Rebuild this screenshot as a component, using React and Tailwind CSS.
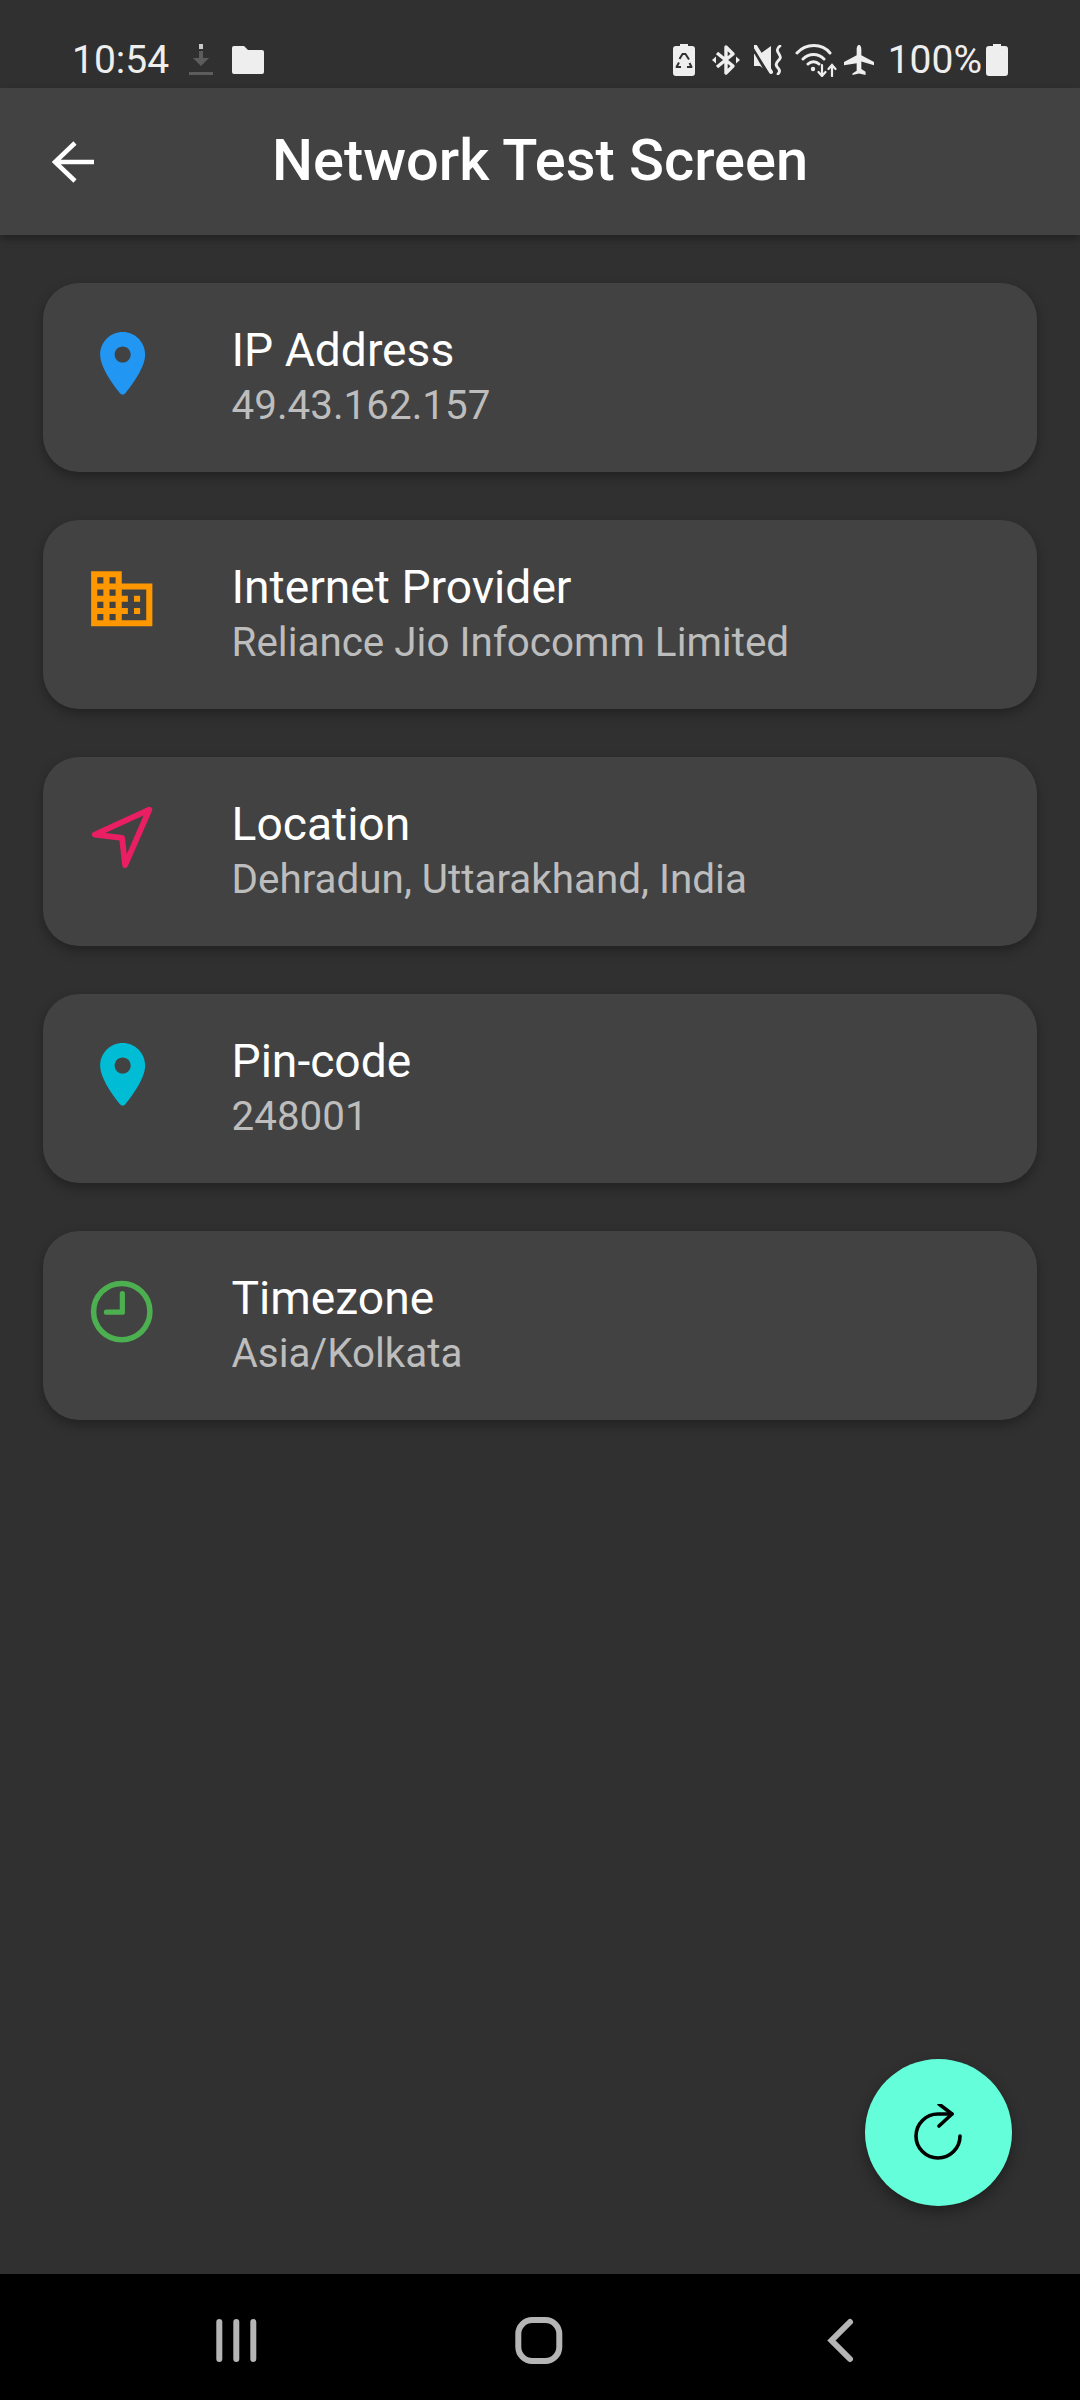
const roboto = { fontFamily: "Roboto, sans-serif" };

function Place({ color }) {
  return (
    <svg viewBox="0 0 24 24" className="w-[73.5px] h-[73.5px] shrink-0" fill={color}>
      <path
        transform="translate(12.3 2.3) scale(1.05) translate(-12 -2)"
        fillRule="evenodd"
        d="M12 2c-3.87 0-7 3.13-7 7 0 4.17 4.42 9.92 6.24 12.11.4.48 1.13.48 1.53 0C14.58 18.92 19 13.17 19 9c0-3.87-3.13-7-7-7zm0 9.5c-1.38 0-2.5-1.12-2.5-2.5s1.12-2.5 2.5-2.5 2.5 1.12 2.5 2.5-1.12 2.5-2.5 2.5z"
      />
    </svg>
  );
}
function Business() {
  return (
    <svg viewBox="0 0 24 24" className="w-[73.5px] h-[73.5px] shrink-0" fill="#FF9800">
      <path d="M12 7V3H2v18h20V7H12zM6 19H4v-2h2v2zm0-4H4v-2h2v2zm0-4H4V9h2v2zm0-4H4V5h2v2zm4 12H8v-2h2v2zm0-4H8v-2h2v2zm0-4H8V9h2v2zm0-4H8V5h2v2zm10 12h-8v-2h2v-2h-2v-2h2v-2h-2V9h8v10zm-2-8h-2v2h2v-2zm0 4h-2v2h2v-2z" />
    </svg>
  );
}
function NearMe() {
  return (
    <svg viewBox="0 0 24 24" className="w-[73.5px] h-[73.5px] shrink-0" fill="none" stroke="#E91E63" strokeWidth="1.9" strokeLinejoin="round">
      <path d="M21 3.500 3.200 11.600l8.900 1.100 1 8.900z" />
    </svg>
  );
}
function Clock() {
  return (
    <svg viewBox="0 0 24 24" className="w-[73.5px] h-[73.5px] shrink-0" fill="none" stroke="#4CAF50" strokeWidth="1.8" strokeLinecap="round" strokeLinejoin="round">
      <circle cx="12" cy="12.600" r="9.200" />
      <path d="M12.200 6.700v6.100H7" strokeWidth="1.700" />
    </svg>
  );
}

function Card({ icon, title, sub }) {
  return (
    <div className="flex h-[189px] items-start rounded-[36px] bg-[#424242] p-[42px] shadow-[0_5px_12px_rgba(0,0,0,0.3)]">
      {icon}
      <div className="ml-[73px] -mt-[2px]">
        <div className="text-[46.2px] leading-[55px] text-white">{title}</div>
        <div className="mt-[3px] text-[40.4px] leading-[50px] text-[#bdbdbd]">{sub}</div>
      </div>
    </div>
  );
}

function Battery({ children }) {
  return (
    <svg viewBox="0 0 22 32" className="w-[22px] h-[32px]" fill="#eeeeee">
      <path d="M7 0h8v2h4a3 3 0 0 1 3 3v24a3 3 0 0 1-3 3H3a3 3 0 0 1-3-3V5a3 3 0 0 1 3-3h4z" />
      {children}
    </svg>
  );
}

function StatusBar() {
  return (
    <div className="flex h-[88px] items-center justify-between bg-[#303030] pl-[72px] pr-[72px] pt-[32px] text-[#eeeeee]">
      <div className="flex items-center">
        <span className="text-[39px] leading-[44px]">10:54</span>
        <svg viewBox="0 0 28 36" className="ml-[18px] w-[28px] h-[36px]" fill="#5c5c5c">
          <path d="M12 2h4v5h-4z" fill="#c8c8c8" />
          <path d="M12 9h4v7h6l-8 8-8-8h6zM2 30h24v3H2z" />
        </svg>
        <svg viewBox="0 0 32 28" className="ml-[17px] w-[32px] h-[28px]" fill="#eeeeee">
          <path d="M2 0h10l4 4h14a2 2 0 0 1 2 2v20a2 2 0 0 1-2 2H2a2 2 0 0 1-2-2V2a2 2 0 0 1 2-2z" />
        </svg>
      </div>
      <div className="flex items-center">
        <Battery>
          <path d="M9.500 10 6.500 15M12.500 10l3.500 5.500M8 23H3.500l2.500-4.500M14 23h4.500l-2-4" fill="none" stroke="#303030" strokeWidth="2" strokeLinejoin="round" />
          <path d="M9 10h4" fill="none" stroke="#303030" strokeWidth="2" />
        </Battery>
        <svg viewBox="0 0 28 32" className="ml-[17px] w-[28px] h-[32px]" fill="none" stroke="#eeeeee" strokeWidth="3.400" strokeLinejoin="round">
          <path d="M5 9l16 13-7 7V3l7 7L5 23" />
          <path d="M0 16l4-3.500v7zM28 16l-4-3.500v7z" fill="#eeeeee" stroke="none" />
        </svg>
        <svg viewBox="0 0 30 30" className="ml-[14px] w-[30px] h-[30px]">
          <path d="M0 9h6l11-8v28L6 21H0z" fill="#eeeeee" />
          <path d="M0 2l16 28" stroke="#303030" strokeWidth="6" />
          <path d="M1 1l16 26" stroke="#eeeeee" strokeWidth="4" strokeLinecap="round" />
          <path d="M26 1c-4 3-3 5-1 8s2 4-1 7-2 5 0 7 2 4 0 6" fill="none" stroke="#eeeeee" strokeWidth="2.800" strokeLinecap="round" />
        </svg>
        <svg viewBox="0 0 42 34" className="ml-[11px] w-[42px] h-[34px]" fill="none" stroke="#eeeeee" strokeWidth="3" strokeLinecap="round">
          <path d="M2 10c9-10 25-10 33 0M8 16c6-6 15-6 21 0M13 21c3-3 8-3 11 0" />
          <circle cx="18" cy="26" r="2.200" fill="#eeeeee" stroke="none" />
          <path d="M27 22v11M23.500 29l3.500 4 3.500-4M37 33V22M33.500 26l3.500-4 3.500 4" strokeWidth="2.200" />
        </svg>
        <svg viewBox="0 0 32 32" className="ml-[7px] w-[30px] h-[30px]" fill="#eeeeee">
          <path d="M16 0c2 0 2.500 3 2.500 5v6L32 18v3.500l-13.500-4v8l4.500 3V32l-7-1.500L9 32v-1.500l4.500-3v-8L0 21.500V18l13.500-7V5c0-2 .5-5 2.500-5z" />
        </svg>
        <span className="ml-[14px] text-[39px] leading-[44px]">100%</span>
        <div className="ml-[4px]">
          <Battery />
        </div>
      </div>
    </div>
  );
}

export default function App() {
  return (
    <div className="relative flex h-[2400px] w-[1080px] flex-col overflow-hidden bg-[#303030]" style={roboto}>
      <StatusBar />
      <header className="flex h-[147px] items-center bg-[#424242] shadow-[0_4px_8px_rgba(0,0,0,0.3)]">
        <svg viewBox="0 0 42 42" className="ml-[52px] w-[42px] h-[42px]" fill="none" stroke="#ffffff" strokeWidth="4.500">
          <path d="M44 21H2M23 2 3 21l20 19" />
        </svg>
        <h1 className="ml-[178px] -mt-[2px] text-[57.75px] font-medium leading-none text-white">Network Test Screen</h1>
      </header>
      <main className="flex flex-1 flex-col gap-[48px] px-[43px] pt-[48px]">
        <Card icon={<Place color="#2196F3" />} title="IP Address" sub="49.43.162.157" />
        <Card icon={<Business />} title="Internet Provider" sub="Reliance Jio Infocomm Limited" />
        <Card icon={<NearMe />} title="Location" sub="Dehradun, Uttarakhand, India" />
        <Card icon={<Place color="#00BCD4" />} title="Pin-code" sub="248001" />
        <Card icon={<Clock />} title="Timezone" sub="Asia/Kolkata" />
      </main>
      <button className="absolute left-[865px] top-[2059px] flex h-[147px] w-[147px] items-center justify-center rounded-full bg-[#64FFDA] shadow-[0_6px_14px_rgba(0,0,0,0.35)]">
        <svg viewBox="0 0 60 60" className="ml-[2px] mt-[3px] w-[60px] h-[60px]" fill="none" stroke="#000000" strokeWidth="3.600" strokeLinecap="round" strokeLinejoin="round">
          <path d="M50 32a22 22 0 1 1-22-22h14" />
          <path d="M29 0l13 10-13 12" />
        </svg>
      </button>
      <nav className="flex h-[126px] items-center bg-black">
        <svg viewBox="0 0 52 60" className="ml-[210px] w-[52px] h-[60px]" fill="none" stroke="#b5b5b5" strokeWidth="6" strokeLinecap="round">
          <path d="M9.300 15v37M26.300 15v37M43.300 15v37" />
        </svg>
        <svg viewBox="0 0 54 60" className="ml-[250px] w-[54px] h-[60px]" fill="none" stroke="#b5b5b5" strokeWidth="6">
          <rect x="6.300" y="13" width="41" height="41" rx="14" />
        </svg>
        <svg viewBox="0 0 32 60" className="ml-[258px] w-[32px] h-[60px]" fill="none" stroke="#b5b5b5" strokeWidth="6" strokeLinecap="round" strokeLinejoin="miter">
          <path d="M26 15 7.500 33.500 26 52" />
        </svg>
      </nav>
    </div>
  );
}
